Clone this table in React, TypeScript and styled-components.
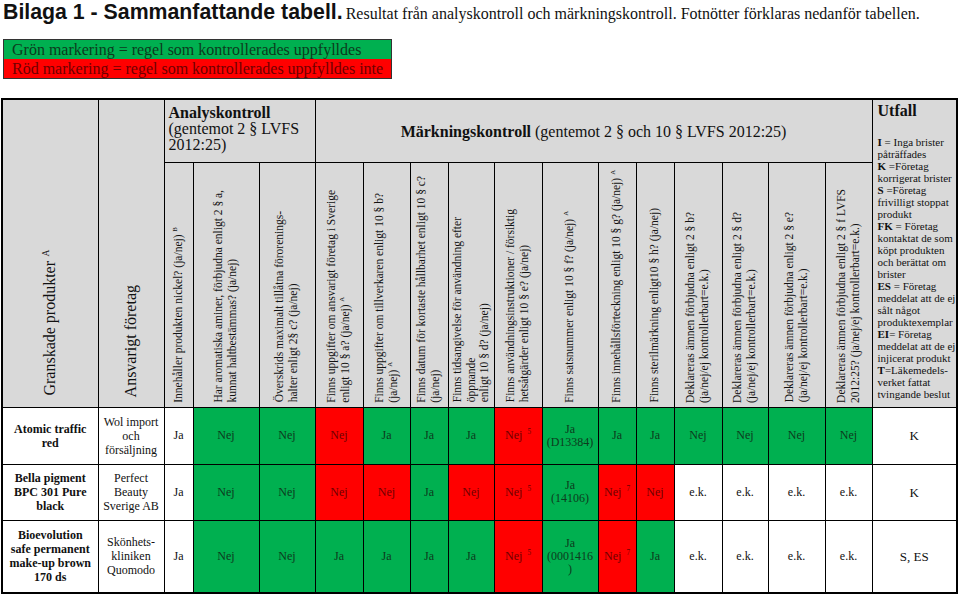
import React from "react";
import styled, { createGlobalStyle } from "styled-components";

const colors = {
  green: "#00b050",
  red: "#ff0000",
  gray: "#d9d9d9",
  white: "#ffffff",
  onGreen: "#0d3b1d",
  onRed: "#6e0000",
  ink: "#111111",
};

const GlobalStyle = createGlobalStyle`
  html, body {
    margin: 0;
    padding: 0;
    background: #fff;
  }
  body {
    font-family: "Liberation Serif", "Times New Roman", serif;
    color: ${colors.ink};
  }
`;

const Page = styled.div`
  width: 960px;
  height: 594px;
  padding: 0 3px 0 1px;
  box-sizing: border-box;
  overflow: hidden;
`;

const TitleLine = styled.div`
  display: flex;
  align-items: baseline;
  padding-left: 2px;
  height: 24px;
  white-space: nowrap;
`;

const TitleBold = styled.span`
  font-family: "Liberation Sans", Arial, sans-serif;
  font-weight: 700;
  font-size: 21.3px;
  line-height: 24px;
`;

const TitleRest = styled.span`
  font-size: 16px;
  margin-left: 3px;
`;

const Legend = styled.div`
  width: 387px;
  margin: 15px 0 0 2px;
  border: 1px solid #333;
`;

const LegendRow = styled.div<{ $tone: "green" | "red" }>`
  height: 19px;
  line-height: 19px;
  padding-left: 8px;
  font-size: 16px;
  white-space: nowrap;
  background: ${(p) => (p.$tone === "green" ? colors.green : colors.red)};
  color: ${(p) => (p.$tone === "green" ? colors.onGreen : colors.onRed)};
`;

const Table = styled.table`
  margin-top: 19px;
  width: 956px;
  table-layout: fixed;
  border-collapse: collapse;
  border: 2px solid #000;

  th,
  td {
    box-sizing: border-box;
  }
`;

const HeadCell = styled.th<{ $h?: number; $align?: "left" | "center" }>`
  background: ${colors.gray};
  border: 1px solid #000;
  font-weight: 400;
  padding: 0;
  height: ${(p) => (p.$h ? `${p.$h}px` : "auto")};
  text-align: ${(p) => p.$align ?? "center"};
`;

const SideHead = styled(HeadCell)<{ $pb: number }>`
  vertical-align: bottom;
  padding-bottom: ${(p) => p.$pb}px;
`;

const GroupHead = styled(HeadCell)`
  vertical-align: top;
  padding: 5px 4px 0 4px;
  font-size: 16px;
  line-height: 16px;
`;

const MarkHead = styled(HeadCell)`
  vertical-align: middle;
  font-size: 16px;
  padding-top: 2px;
`;

const UtfallHead = styled(HeadCell)`
  vertical-align: top;
  text-align: left;
  padding: 2px 2px 0 5px;
`;

const UtfallTitle = styled.div`
  font-weight: 700;
  font-size: 16px;
  line-height: 18px;
  margin-bottom: 16px;
`;

const UtfallText = styled.div`
  font-size: 11px;
  line-height: 12px;
  font-weight: 400;
  white-space: nowrap;
  b {
    font-weight: 700;
  }
`;

const RotHead = styled(HeadCell)`
  vertical-align: bottom;
  padding: 0 1px 4px;
`;

const Center = styled.div`
  display: flex;
  justify-content: center;
`;

const Rot = styled.div<{ $size?: number }>`
  writing-mode: vertical-rl;
  text-orientation: sideways;
  transform: rotate(180deg);
  white-space: nowrap;
  text-align: left;
  font-size: ${(p) => p.$size ?? 11.5}px;
  line-height: 1.18;
`;

const Sup = styled.sup`
  font-size: 0.6em;
  line-height: 0;
  vertical-align: super;
  margin-left: 2px;
`;

type Tone = "g" | "r" | "w";

const Cell = styled.td<{ $tone: Tone; $h?: number }>`
  border: 1px solid #000;
  padding: 0 2px;
  text-align: center;
  vertical-align: middle;
  font-size: 12px;
  line-height: 13px;
  height: ${(p) => (p.$h ? `${p.$h}px` : "auto")};
  background: ${(p) =>
    p.$tone === "g" ? colors.green : p.$tone === "r" ? colors.red : colors.white};
  color: ${(p) =>
    p.$tone === "g" ? colors.onGreen : p.$tone === "r" ? colors.onRed : colors.ink};
`;

const ProductCell = styled(Cell)`
  font-weight: 700;
  line-height: 14px;
`;

const CompanyCell = styled(Cell)`
  line-height: 14px;
`;

const OutcomeCell = styled(Cell)`
  font-size: 13px;
`;

const widths = [96, 66, 29, 66, 56, 48, 47, 38, 46, 48, 56, 38, 38, 48, 46, 57, 47, 85];

type Q = { lines: React.ReactNode[] };

const questions: Q[] = [
  { lines: [<>Innehåller produkten nickel? (ja/nej) <Sup>B</Sup></>] },
  { lines: ["Har aromatiska aminer, förbjudna  enligt  2 § a,", "kunnat haltbestämmas? (ja/nej)"] },
  { lines: ["Överskrids maximalt tillåtna  förorenings-", "halter enligt 2§ c? (ja/nej)"] },
  { lines: ["Finns uppgifter om ansvarigt företag i Sverige", <>enligt 10 § a? (ja/nej) <Sup>A</Sup></>] },
  { lines: ["Finns uppgifter om tillverkaren  enligt 10 § b?", <>(ja/nej) <Sup>A</Sup></>] },
  { lines: ["Finns datum för kortaste hållbarhet enligt 10 § c?", "(ja/nej)"] },
  { lines: ["Finns tidsangivelse för användning  efter", "öppnande", "enligt 10 § d? (ja/nej)"] },
  { lines: ["Finns användningsinstruktioner / försiktig", "hetsåtgärder enligt 10 § e? (ja/nej)"] },
  { lines: [<>Finns satsnummer enligt  10 § f? (ja/nej) <Sup>A</Sup></>] },
  { lines: [<>Finns innehållsförteckning enligt 10 § g? (ja/nej) <Sup>A</Sup></>] },
  { lines: ["Finns sterilmärkning enligt10 § h?  (ja/nej)"] },
  { lines: ["Deklareras ämnen förbjudna enligt  2 § b?", "(ja/nej/ej kontrollerbart=e.k.)"] },
  { lines: ["Deklareras ämnen förbjudna enligt  2 § d?", "(ja/nej/ej kontrollerbart=e.k.)"] },
  { lines: ["Deklareras ämnen förbjudna enligt  2 § e?", "(ja/nej/ej kontrollerbart=e.k.)"] },
  { lines: ["Deklareras ämnen förbjudna enligt  2 § f LVFS", "2012:25? (ja/nej/ej kontrollerbart=e.k.)"] },
];

type Val = { t: React.ReactNode; c: Tone };

const ja = (c: Tone = "g"): Val => ({ t: "Ja", c });
const nej = (c: Tone = "g"): Val => ({ t: "Nej", c });
const nejSup = (n: string): Val => ({ t: <>Nej <Sup>{n}</Sup></>, c: "r" });
const ek: Val = { t: "e.k.", c: "w" };

type Row = {
  product: string[];
  company: string[];
  values: Val[];
  outcome: string;
  height: number;
};

const rows: Row[] = [
  {
    product: ["Atomic traffic", "red"],
    company: ["Wol import", "och", "försäljning"],
    values: [
      ja("w"), nej(), nej(), nej("r"), ja(), ja(), ja(), nejSup("5"),
      { t: <>Ja<br />(D13384)</>, c: "g" },
      ja(), ja(), nej(), nej(), nej(), nej(),
    ],
    outcome: "K",
    height: 57,
  },
  {
    product: ["Bella pigment", "BPC 301 Pure", "black"],
    company: ["Perfect", "Beauty", "Sverige AB"],
    values: [
      ja("w"), nej(), nej(), nej("r"), nej("r"), ja(), nej("r"), nejSup("5"),
      { t: <>Ja<br />(14106)</>, c: "g" },
      nejSup("7"), nej("r"), ek, ek, ek, ek,
    ],
    outcome: "K",
    height: 56,
  },
  {
    product: ["Bioevolution", "safe permanent", "make-up brown", "170 ds"],
    company: ["Skönhets-", "kliniken", "Quomodo"],
    values: [
      ja("w"), nej(), nej(), ja(), ja(), ja(), ja(), nejSup("5"),
      { t: <>Ja<br />(0001416<br />)</>, c: "g" },
      nejSup("7"), ja(), ek, ek, ek, ek,
    ],
    outcome: "S, ES",
    height: 73,
  },
];

const withBreaks = (lines: React.ReactNode[]) =>
  lines.map((l, i) => (
    <React.Fragment key={i}>
      {i > 0 && <br />}
      {l}
    </React.Fragment>
  ));

export default function App() {
  return (
    <Page>
      <GlobalStyle />
      <TitleLine>
        <TitleBold>Bilaga 1 - Sammanfattande tabell.</TitleBold>
        <TitleRest>
          Resultat från analyskontroll och märkningskontroll. Fotnötter förklaras nedanför tabellen.
        </TitleRest>
      </TitleLine>

      <Legend>
        <LegendRow $tone="green">Grön markering = regel som kontrollerades uppfylldes</LegendRow>
        <LegendRow $tone="red">Röd markering = regel som kontrollerades uppfylldes inte</LegendRow>
      </Legend>

      <Table>
        <colgroup>
          {widths.map((w, i) => (
            <col key={i} style={{ width: w }} />
          ))}
        </colgroup>
        <thead>
          <tr>
            <SideHead rowSpan={2} $pb={11}>
              <Center>
                <Rot $size={16}>
                  Granskade produkter <Sup>A</Sup>
                </Rot>
              </Center>
            </SideHead>
            <SideHead rowSpan={2} $pb={9}>
              <Center>
                <Rot $size={16}>Ansvarigt företag</Rot>
              </Center>
            </SideHead>
            <GroupHead colSpan={3} $h={63} $align="left">
              <b>Analyskontroll</b>
              <br />
              (gentemot 2 § LVFS
              <br />
              2012:25)
            </GroupHead>
            <MarkHead colSpan={12}>
              <b>Märkningskontroll</b> (gentemot 2 § och 10 § LVFS 2012:25)
            </MarkHead>
            <UtfallHead rowSpan={2}>
              <UtfallTitle>Utfall</UtfallTitle>
              <UtfallText>
                <b>I</b> = Inga brister
                <br />
                påträffades
                <br />
                <b>K</b> =Företag
                <br />
                korrigerat brister
                <br />
                <b>S</b> =Företag
                <br />
                frivilligt stoppat
                <br />
                produkt
                <br />
                <b>FK</b> = Företag
                <br />
                kontaktat de som
                <br />
                köpt produkten
                <br />
                och berättat om
                <br />
                brister
                <br />
                <b>ES</b> = Företag
                <br />
                meddelat att de ej
                <br />
                sålt något
                <br />
                produktexemplar
                <br />
                <b>EI</b>= Företag
                <br />
                meddelat att de ej
                <br />
                injicerat produkt
                <br />
                <b>T</b>=Läkemedels-
                <br />
                verket fattat
                <br />
                tvingande beslut
              </UtfallText>
            </UtfallHead>
          </tr>
          <tr>
            {questions.map((q, i) => (
              <RotHead key={i} $h={245}>
                <Center>
                  <Rot>{withBreaks(q.lines)}</Rot>
                </Center>
              </RotHead>
            ))}
          </tr>
        </thead>
        <tbody>
          {rows.map((r, ri) => (
            <tr key={ri}>
              <ProductCell $tone="w" $h={r.height}>
                {withBreaks(r.product)}
              </ProductCell>
              <CompanyCell $tone="w">{withBreaks(r.company)}</CompanyCell>
              {r.values.map((v, vi) => (
                <Cell key={vi} $tone={v.c}>
                  {v.t}
                </Cell>
              ))}
              <OutcomeCell $tone="w">{r.outcome}</OutcomeCell>
            </tr>
          ))}
        </tbody>
      </Table>
    </Page>
  );
}
